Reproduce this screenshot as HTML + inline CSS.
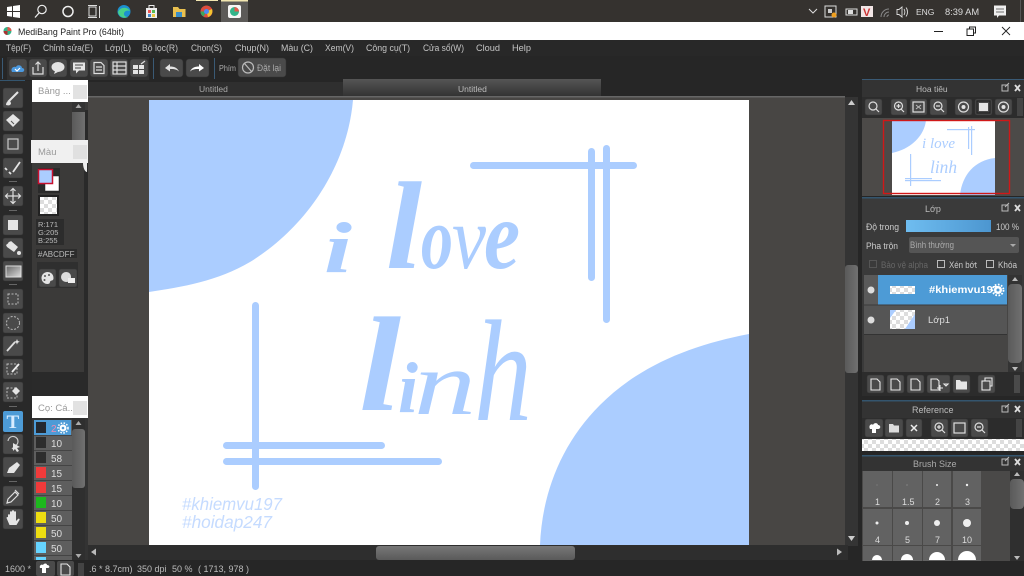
<!DOCTYPE html>
<html><head><meta charset="utf-8"><style>
html,body{margin:0;padding:0;width:1024px;height:576px;overflow:hidden;background:#262626}
svg{display:block;position:absolute;left:0;top:0}
text{font-family:"Liberation Sans","Noto Sans CJK JP",sans-serif;font-size:9.5px;fill:#c8c8c8}
.b{fill:#4a4a4a;stroke:#333;stroke-width:.5}
.w{fill:#e4e4e4}
.o{fill:none;stroke:#dedede;stroke-width:1.2}
.t{fill:none;stroke:#e8e8e8;stroke-width:1.1}
.a{fill:#abcdff}
.m{font-size:9px;fill:#c4c4c4}
.s{font-family:"Liberation Serif",serif;font-style:italic;fill:#abcdff}
</style></head><body>
<svg width="1024" height="576" viewBox="0 0 1024 576" xmlns="http://www.w3.org/2000/svg">
<defs>
<linearGradient id="tab" x1="0" y1="0" x2="0" y2="1"><stop offset="0" stop-color="#555"/><stop offset="1" stop-color="#333"/></linearGradient>
<linearGradient id="thumb" x1="0" y1="0" x2="1" y2="0"><stop offset="0" stop-color="#5a5a5a"/><stop offset="1" stop-color="#707070"/></linearGradient>
<linearGradient id="thumbh" x1="0" y1="0" x2="0" y2="1"><stop offset="0" stop-color="#777"/><stop offset="1" stop-color="#5a5a5a"/></linearGradient>
<linearGradient id="op" x1="0" y1="0" x2="1" y2="0"><stop offset="0" stop-color="#6fbdf0"/><stop offset="1" stop-color="#4c96d0"/></linearGradient>
<linearGradient id="gr" x1="0" y1="0" x2="1" y2="1"><stop offset="0" stop-color="#666"/><stop offset="1" stop-color="#ddd"/></linearGradient>
<pattern id="chk" width="8" height="8" patternUnits="userSpaceOnUse"><rect width="8" height="8" fill="#fff"/><rect width="4" height="4" fill="#ddd"/><rect x="4" y="4" width="4" height="4" fill="#ddd"/></pattern>
</defs>

<!-- taskbar -->
<rect width="1024" height="22" fill="#35322f"/>
<rect x="221" y="0" width="27" height="22" fill="#5c5a58"/>
<rect x="196" y="0" width="22" height="1" fill="#f2e6b0"/><rect x="221" y="0" width="27" height="1.500" fill="#f2e6b0"/>
<path d="M7 7l5-.8V11H7zM13 6l7-1v6h-7zM7 12h5v4.800L7 16zM13 12h7v6l-7-1z" fill="#fff"/>
<circle cx="42" cy="9.500" r="4.200" fill="none" stroke="#eee" stroke-width="1.200"/><path d="M39 13l-4 4.500" stroke="#eee" stroke-width="1.300"/>
<circle cx="68" cy="11.500" r="5" fill="none" stroke="#eee" stroke-width="1.500"/>
<path d="M89 7h7v9h-7zM88 5.500h9M88 17.500h9M99.500 6v12" fill="none" stroke="#ddd" stroke-width="1"/>
<circle cx="124" cy="11.500" r="6.500" fill="#1c8fd0"/><path d="M118 12c2-5 9-6 12-1-3-1-6 0-6 3 0 2 2 3 4 3-4 2-9 0-10-5z" fill="#47d08a"/>
<rect x="146" y="8" width="11" height="10" fill="#eee"/><path d="M149 8V5.500h5V8" fill="none" stroke="#eee"/><rect x="148" y="10" width="3" height="3" fill="#e55"/><rect x="152" y="10" width="3" height="3" fill="#5b5"/><rect x="148" y="14" width="3" height="3" fill="#48c"/><rect x="152" y="14" width="3" height="3" fill="#ec4"/>
<path d="M173 7h5l1.500 2h6v8h-12.500z" fill="#e9c04f"/><rect x="176" y="12" width="6" height="5" fill="#3a8ec9"/>
<circle cx="206.500" cy="11.500" r="6" fill="#dc4c3e"/><path d="M206.500 11.500l5.500-2.500a6 6 0 0 1-4 8z" fill="#f4c430"/><path d="M206.500 11.500l-3 5a6 6 0 0 1-3-5z" fill="#3ba55c"/><circle cx="206.500" cy="11.500" r="2.500" fill="#4c8bf5"/>
<rect x="228" y="5" width="13" height="13" rx="2" fill="#f5f5f5"/><circle cx="234.500" cy="11.500" r="4.500" fill="#32b48a"/><path d="M234.500 7a4.500 4.500 0 0 1 4.500 4.500h-4.500z" fill="#e2574c"/>
<path d="M809 9l4 4 4-4" fill="none" stroke="#ddd" stroke-width="1"/>
<rect x="825" y="6" width="11" height="11" fill="none" stroke="#ddd"/><circle cx="834" cy="15" r="2.500" fill="#f0a020"/><rect x="828" y="9" width="4" height="4" fill="#ccc"/>
<rect x="846" y="9" width="11" height="6" fill="none" stroke="#ddd"/><rect x="848" y="10" width="5" height="4" fill="#ddd"/>
<rect x="861" y="6" width="12" height="11" fill="#f2e6e6"/><text x="863" y="16" style="font-size:11px;font-weight:bold;fill:#c33">V</text>
<path d="M881 17a8 8 0 0 1 8-8M884 17a5 5 0 0 1 5-5M887 17a2 2 0 0 1 2-2" fill="none" stroke="#888"/>
<path d="M897 9.500h2l3-2.500v10l-3-2.500h-2zM904 9c1 1.500 1 4 0 6M906 7.500c2 2.500 2 6.500 0 9" fill="none" stroke="#ddd" stroke-width=".9"/>
<text x="916" y="15" style="font-size:8.500px;fill:#ddd">ENG</text>
<text x="945" y="15" style="font-size:9.300px;fill:#ddd">8:39 AM</text>
<path d="M994 5.500h12v10h-7l-2 2.500v-2.500h-3z" fill="#eee"/><path d="M996 9h8M996 12h8" stroke="#444" stroke-width=".8"/>
<rect x="1020" y="0" width="1" height="22" fill="#555"/>

<!-- title bar -->
<rect y="22" width="1024" height="18" fill="#fff"/>
<circle cx="7.500" cy="31" r="4" fill="#32b48a"/><path d="M7.500 27a4 4 0 0 1 4 4h-4z" fill="#e2574c"/><path d="M7.500 31h-4a4 4 0 0 0 4 4z" fill="#a33"/>
<text x="18" y="35" style="font-size:9.300px;fill:#222" textLength="106" lengthAdjust="spacingAndGlyphs">MediBang Paint Pro (64bit)</text>
<rect x="934" y="31" width="9" height="1" fill="#222"/>
<rect x="967" y="29" width="6.500" height="6.500" fill="#fff" stroke="#222"/><path d="M969.500 29v-2h6v6h-2" fill="none" stroke="#222"/>
<path d="M1002 27l8 8M1010 27l-8 8" stroke="#222" stroke-width=".9"/>

<!-- menu -->
<rect y="40" width="1024" height="16" fill="#282828"/>
<text class="m" x="6" y="51" textLength="25" lengthAdjust="spacingAndGlyphs">Tệp(F)</text>
<text class="m" x="43" y="51" textLength="50" lengthAdjust="spacingAndGlyphs">Chỉnh sửa(E)</text>
<text class="m" x="105" y="51" textLength="26" lengthAdjust="spacingAndGlyphs">Lớp(L)</text>
<text class="m" x="142" y="51" textLength="36" lengthAdjust="spacingAndGlyphs">Bộ lọc(R)</text>
<text class="m" x="191" y="51" textLength="31" lengthAdjust="spacingAndGlyphs">Chọn(S)</text>
<text class="m" x="235" y="51" textLength="34" lengthAdjust="spacingAndGlyphs">Chụp(N)</text>
<text class="m" x="281" y="51" textLength="32" lengthAdjust="spacingAndGlyphs">Màu (C)</text>
<text class="m" x="325" y="51" textLength="29" lengthAdjust="spacingAndGlyphs">Xem(V)</text>
<text class="m" x="366" y="51" textLength="44" lengthAdjust="spacingAndGlyphs">Công cụ(T)</text>
<text class="m" x="423" y="51" textLength="41" lengthAdjust="spacingAndGlyphs">Cửa sổ(W)</text>
<text class="m" x="476" y="51" textLength="24" lengthAdjust="spacingAndGlyphs">Cloud</text>
<text class="m" x="512" y="51" textLength="19" lengthAdjust="spacingAndGlyphs">Help</text>

<!-- toolbar -->
<rect y="56" width="1024" height="26" fill="#262626"/>
<rect x="2" y="58" width="1" height="21" fill="#3a5a75"/><rect x="153" y="58" width="1" height="21" fill="#3a5a75"/><rect x="214" y="58" width="1" height="21" fill="#3a5a75"/>
<rect x="7" y="57" width="142" height="23" fill="#2f2f2f"/>
<g>
<rect class="b" x="9" y="59" width="18" height="18" rx="3"/><rect class="b" x="29" y="59" width="18" height="18" rx="3"/><rect class="b" x="49" y="59" width="18" height="18" rx="3"/><rect class="b" x="70" y="59" width="18" height="18" rx="3"/><rect class="b" x="90" y="59" width="18" height="18" rx="3"/><rect class="b" x="110" y="59" width="18" height="18" rx="3"/><rect class="b" x="130" y="59" width="18" height="18" rx="3"/>
<rect class="b" x="160" y="59" width="23" height="18" rx="3"/><rect class="b" x="186" y="59" width="23" height="18" rx="3"/>
<rect class="b" x="238" y="58" width="48" height="19" rx="3"/>
</g>
<path d="M12 72c-2-4 2-6 4-5 1-3 6-2 6 1 3 0 3 4 0 4z" fill="#4c9ae0"/><path d="M15 69l2 2 3-3" stroke="#fff" fill="none" stroke-width="1.200"/>
<path d="M33 67v7h10v-7M38 71v-9M35.500 64.500l2.500-2.500 2.500 2.500" class="o"/>
<ellipse cx="58" cy="67" rx="6.500" ry="5" class="w"/><path d="M55 71l-1 3 4-2z" class="w"/>
<path d="M73 62.500h12v8h-6l-3 3v-3h-3z" class="w"/><path d="M75 65h8M75 68h6" stroke="#444"/>
<path d="M94 62.500h7l3 3v8h-10zM96 67h6M96 70h6" class="o"/>
<rect x="113" y="62" width="13" height="12" class="o"/><path d="M113 66h13M113 70h13M117 62v12" class="o"/>
<path d="M133 65h5v4h-5zM139 65h5v4h-5zM133 70h5v4h-5zM139 70h5v4h-5z" class="w"/><path d="M141 64l4-3" class="o"/>
<path d="M165 68l5-4v2.500c4 0 7 1 9 5-3-2.500-5-2.500-9-2.500v2.500z" class="w"/>
<path d="M204 68l-5-4v2.500c-4 0-7 1-9 5 3-2.500 5-2.500 9-2.500v2.500z" fill="#fff"/>
<text x="219" y="71" style="font-size:8.500px;fill:#aaa" textLength="17" lengthAdjust="spacingAndGlyphs">Phím</text>
<circle cx="248" cy="67.500" r="5.500" fill="none" stroke="#bbb" stroke-width="1.200"/><path d="M244.500 63.500l7 8" stroke="#bbb" stroke-width="1.200"/>
<text x="257" y="71" style="font-size:9px;fill:#aaa" textLength="24" lengthAdjust="spacingAndGlyphs">Đặt lại</text>

<!-- tabs -->
<rect x="88" y="82" width="257" height="14" fill="#2f2f2f"/>
<rect x="343" y="79" width="258" height="17" fill="url(#tab)"/>
<text x="199" y="92" style="font-size:8.500px;fill:#aaa">Untitled</text>
<text x="458" y="92" style="font-size:8.500px;fill:#bbb">Untitled</text>
<rect x="0" y="80" width="25" height="1" fill="#34556e"/>

<!-- canvas area -->
<rect x="88" y="96" width="757" height="450" fill="#484644"/>
<rect x="88" y="96" width="757" height="1.500" fill="#666"/>
<rect x="149" y="100" width="600" height="445" fill="#fff"/>
<path class="a" d="M149 100H353C347 168 305 228 250 262C218 281 182 287 149 292Z"/>
<path class="a" d="M749 334C692 345 640 365 600 405C560 445 542 495 540 545H749Z"/>
<g class="a">
<rect x="470" y="162" width="167" height="7" rx="3.500"/><rect x="588" y="148" width="7" height="133" rx="3.500"/><rect x="603" y="145" width="7" height="178" rx="3.500"/>
<rect x="252" y="302" width="7" height="188" rx="3.500"/><rect x="223" y="442" width="162" height="7" rx="3.500"/><rect x="223" y="458" width="219" height="7" rx="3.500"/>
</g>
<!-- hand lettering approximated with real text, letter by letter -->
<text class="s" x="324" y="272" style="font-size:72px;font-weight:bold" textLength="28" lengthAdjust="spacingAndGlyphs">i</text>
<text class="s" x="386" y="268" style="font-size:125px;font-weight:bold" textLength="36" lengthAdjust="spacingAndGlyphs">l</text>
<text class="s" x="421" y="268" style="font-size:90px;font-weight:bold" textLength="32" lengthAdjust="spacingAndGlyphs">o</text>
<text class="s" x="452" y="268" style="font-size:90px" textLength="34" lengthAdjust="spacingAndGlyphs">v</text>
<text class="s" x="484" y="268" style="font-size:98px;font-weight:bold" textLength="36" lengthAdjust="spacingAndGlyphs">e</text>
<text class="s" x="359" y="410" style="font-size:135px;font-weight:bold" textLength="42" lengthAdjust="spacingAndGlyphs">l</text>
<text class="s" x="398" y="412" style="font-size:72px;font-weight:bold" textLength="20" lengthAdjust="spacingAndGlyphs">i</text>
<text class="s" x="414" y="414" style="font-size:90px" textLength="62" lengthAdjust="spacingAndGlyphs">n</text>
<text class="s" x="474" y="420" style="font-size:145px" textLength="58" lengthAdjust="spacingAndGlyphs">h</text>
<text x="182" y="510" style="font-size:17.500px;font-style:italic;fill:#c5dbff" textLength="100" lengthAdjust="spacingAndGlyphs">#khiemvu197</text>
<text x="182" y="528" style="font-size:17.500px;font-style:italic;fill:#c5dbff" textLength="90" lengthAdjust="spacingAndGlyphs">#hoidap247</text>

<!-- vertical scroll -->
<rect x="845" y="96" width="17" height="464" fill="#262626"/>
<rect x="845" y="97" width="13" height="449" fill="#343434"/>
<path d="M851.500 100l3.500 5h-7z" fill="#ccc"/><path d="M851.500 541l3.500-5h-7z" fill="#ccc"/>
<rect x="845" y="265" width="13" height="108" rx="3" fill="url(#thumb)"/>
<!-- horizontal scroll -->
<rect x="88" y="545" width="760" height="15" fill="#2e2e2e"/>
<rect x="376" y="546" width="199" height="14" rx="3" fill="url(#thumbh)"/>
<path d="M91 552l5-3.500v7z" fill="#bbb"/><path d="M842 552l-5-3.500v7z" fill="#bbb"/>

<!-- status -->
<rect y="560" width="1024" height="16" fill="#262626"/>
<text x="5" y="572" style="font-size:9px;fill:#bbb">1600 *</text>
<rect x="36" y="561" width="19" height="15" rx="2" fill="#4a4a4a"/><rect x="57" y="561" width="17" height="15" rx="2" fill="#4a4a4a"/><rect x="78" y="563" width="6" height="13" fill="#444"/>
<path d="M40 568c-1-3 2-4 3-3 1-2 4-2 4 0 3 0 3 3 1 3h-2v5h-4v-5z" fill="#fff"/>
<path d="M61 564h6l3 3v8h-9z" class="t"/>
<text x="89" y="572" style="font-size:9px;fill:#bbb">.6 * 8.7cm)</text>
<text x="137" y="572" style="font-size:9px;fill:#bbb">350 dpi</text>
<text x="172" y="572" style="font-size:9px;fill:#bbb">50 %</text>
<text x="198" y="572" style="font-size:9px;fill:#bbb">( 1713, 978 )</text>

<!-- left tool strip -->
<rect x="0" y="81" width="32" height="479" fill="#292929"/>
<g>
<rect class="b" x="3" y="88" width="20" height="20" rx="2"/><rect class="b" x="3" y="111" width="20" height="20" rx="2"/><rect class="b" x="3" y="134" width="20" height="20" rx="2"/><rect class="b" x="3" y="158" width="20" height="20" rx="2"/>
<rect class="b" x="3" y="186" width="20" height="20" rx="2"/><rect class="b" x="3" y="215" width="20" height="20" rx="2"/><rect class="b" x="3" y="238" width="20" height="20" rx="2"/><rect class="b" x="3" y="261" width="20" height="20" rx="2"/>
<rect class="b" x="3" y="289" width="20" height="20" rx="2"/><rect class="b" x="3" y="313" width="20" height="20" rx="2"/><rect class="b" x="3" y="336" width="20" height="20" rx="2"/><rect class="b" x="3" y="359" width="20" height="20" rx="2"/><rect class="b" x="3" y="382" width="20" height="20" rx="2"/>
<rect x="3" y="411" width="20" height="21" rx="2" fill="#4d9bd6"/><rect class="b" x="3" y="434" width="20" height="20" rx="2"/><rect class="b" x="3" y="457" width="20" height="20" rx="2"/><rect class="b" x="3" y="486" width="20" height="20" rx="2"/><rect class="b" x="3" y="509" width="20" height="20" rx="2"/>
</g>
<g fill="#666"><rect x="9" y="181" width="8" height="1"/><rect x="9" y="210" width="8" height="1"/><rect x="9" y="284" width="8" height="1"/><rect x="9" y="406" width="8" height="1"/><rect x="9" y="481" width="8" height="1"/></g>
<path d="M8 102l10-10" stroke="#e4e4e4" stroke-width="2"/><path d="M6 105c0-3 2-4 4-4l1 2c0 2-2 3-5 2z" class="w"/>
<path d="M13 114l7 6-7 7-7-7z" class="w"/><path d="M11 121l3 3" stroke="#555"/>
<rect x="8" y="139" width="10" height="10" fill="none" stroke="#c8c8c8" stroke-width="1.200"/>
<path d="M5 168l2 2M9 172l2 2M13 172l7-10" fill="none" stroke="#e4e4e4" stroke-width="1.800"/>
<path d="M13 189v14M6 196h14M10.500 191l2.500-2.500 2.500 2.500M10.500 201l2.500 2.500 2.500-2.500M8 193.500l-2.500 2.500 2.500 2.500M18 193.500l2.500 2.500-2.500 2.500" class="o"/>
<rect x="8" y="220" width="10" height="10" class="w"/>
<path d="M6 245l5-4 7 6-4 5-7-5zM8 244c0-3 4-3 4-1" class="w"/><circle cx="19" cy="253" r="2" class="w"/>
<rect x="6" y="266" width="15" height="11" fill="url(#gr)" stroke="#ddd"/>
<rect x="8" y="294" width="10" height="10" fill="none" stroke="#bbb" stroke-dasharray="2 1.500"/>
<circle cx="13" cy="323" r="6.500" fill="none" stroke="#bbb" stroke-dasharray="2 1.500"/>
<path d="M7 351l8-9" stroke="#ddd" stroke-width="1.800"/><path d="M17 339l.8 2 2 .8-2 .8-.8 2-.8-2-2-.8 2-.8z" class="w"/>
<rect x="7" y="364" width="10" height="10" fill="none" stroke="#bbb" stroke-dasharray="2 1.500"/><path d="M12 372l7-8" stroke="#eee" stroke-width="1.800"/>
<rect x="7" y="388" width="10" height="10" fill="none" stroke="#bbb" stroke-dasharray="2 1.500"/><path d="M12 391l4-4 4 4-4 4z" class="w"/>
<text x="6.500" y="428" style="font-family:'Liberation Serif',serif;font-size:19px;font-weight:bold;fill:#d8ecff">T</text>
<path d="M8 441a5 5 0 1 1 7 5l-3 3" fill="none" stroke="#ccc" stroke-width="1.200"/><path d="M13 443l7 4-3 1 2 3-2 1-2-3-2 2z" class="w"/>
<path d="M7 473l2-5 8-6 3 3-6 8z" class="w"/>
<path d="M7 503l1-4 7-7 3 3-7 7zM15 490l4 4" class="o"/>
<path d="M8 518v-3c0-1 2-1 2 0v3-6c0-1 2-1 2 0v5-6c0-1 2-1 2 0v6-5c0-1 2-1 2 0v9l2-2c1-1 2 0 1.500 1l-3 5h-7l-3-7c0-1 1-1.500 2-.5z" class="w"/>

<!-- left panel -->
<rect x="32" y="102" width="56" height="270" fill="#3b3a39"/>
<rect x="84" y="110" width="4" height="262" fill="#2a2a2a"/>
<rect x="32" y="372" width="56" height="24" fill="#2a2a2a"/>
<rect x="72" y="102" width="13" height="40" fill="#333"/>
<path d="M78.500 104l3 4h-6z" fill="#aaa"/>
<rect x="72" y="112" width="13" height="30" fill="url(#thumb)"/>
<rect x="32" y="80" width="56" height="22" fill="#fff"/>
<text x="38" y="94" style="font-size:9.500px;fill:#999">Bảng ...</text>
<rect x="73" y="85" width="14" height="14" fill="#e2e2e2"/>
<rect x="31" y="140" width="57" height="23" fill="#f0f0f0"/>
<text x="38" y="155" style="font-size:9.500px;fill:#999">Màu</text>
<rect x="73" y="145" width="14" height="14" fill="#e0e0e0"/>
<path d="M83 163h4v9c-2 0-4-4-4-9z" fill="#eee"/>
<rect x="38" y="168" width="22" height="25" fill="#2b2b2b"/>
<rect x="45" y="176" width="14" height="15" fill="#fff" stroke="#222" stroke-width=".5"/>
<rect x="38.500" y="169.500" width="14" height="14" fill="#abcdff" stroke="#c8102e" stroke-width="1.500"/>
<rect x="38" y="195" width="21" height="21" fill="#222"/>
<rect x="40" y="197" width="17" height="17" fill="url(#chk)"/>
<rect x="36" y="219" width="28" height="26" fill="#2c2c2c"/>
<text x="38" y="227" style="font-size:7.500px;fill:#bbb">R:171</text><text x="38" y="235" style="font-size:7.500px;fill:#bbb">G:205</text><text x="38" y="243" style="font-size:7.500px;fill:#bbb">B:255</text>
<rect x="36" y="249" width="41" height="9" fill="#2c2c2c"/>
<text x="38" y="257" style="font-size:8px;fill:#bbb">#ABCDFF</text>
<rect x="37" y="262" width="41" height="26" fill="#2f2f2f"/>
<rect class="b" x="39" y="269" width="17" height="18" rx="2"/><rect class="b" x="59" y="269" width="18" height="18" rx="2"/>
<path d="M47.500 272a6 6 0 0 0 0 12c3 0 2-2 3-3 1-.8 3 0 3-3 0-4-3-6-6-6z" class="w"/><circle cx="45" cy="276" r="1" fill="#555"/><circle cx="49" cy="275" r="1" fill="#555"/><circle cx="44.500" cy="280" r="1" fill="#555"/>
<path d="M66 272a5 5 0 0 0 0 10c4 0 5-2 5-5s-2-5-5-5z" fill="#ddd"/><rect x="68" y="278" width="7" height="5" fill="#eee"/>

<!-- brush panel -->
<rect x="32" y="418" width="56" height="142" fill="#333"/>
<rect x="32" y="396" width="56" height="22" fill="#fff"/>
<text x="38" y="411" style="font-size:9.500px;fill:#999">Cọ: Cá...</text>
<rect x="73" y="401" width="14" height="14" fill="#e2e2e2"/>
<rect x="72" y="418" width="13" height="142" fill="#2f2f2f"/>
<path d="M78.500 421l3 4h-6z" fill="#aaa"/><path d="M78.500 558l3-4h-6z" fill="#aaa"/>
<rect x="72" y="429" width="13" height="59" rx="3" fill="url(#thumb)"/>
<rect x="34" y="420" width="38" height="140" fill="#5e5e5e"/>
<rect x="34" y="420" width="37" height="15" fill="#4d9bd6"/>
<g fill="#444"><rect x="34" y="435" width="38" height="1"/><rect x="34" y="450" width="38" height="1"/><rect x="34" y="465" width="38" height="1"/><rect x="34" y="480" width="38" height="1"/><rect x="34" y="495" width="38" height="1"/><rect x="34" y="510" width="38" height="1"/><rect x="34" y="525" width="38" height="1"/><rect x="34" y="540" width="38" height="1"/><rect x="34" y="555" width="38" height="1"/></g>
<rect x="36" y="422" width="10" height="11" fill="#24282f"/><rect x="36" y="437" width="10" height="11" fill="#2d2d2d"/><rect x="36" y="452" width="10" height="11" fill="#2d2d2d"/><rect x="36" y="467" width="10" height="11" fill="#f03a3a"/><rect x="36" y="482" width="10" height="11" fill="#f03a3a"/><rect x="36" y="497" width="10" height="11" fill="#1db81d"/><rect x="36" y="512" width="10" height="11" fill="#eedd11"/><rect x="36" y="527" width="10" height="11" fill="#eedd11"/><rect x="36" y="542" width="10" height="11" fill="#66d4ff"/><rect x="36" y="557" width="10" height="3" fill="#66d4ff"/>
<text x="51" y="432" style="font-size:10px;fill:#f08ab0">2</text>
<circle cx="63" cy="428" r="3.500" fill="#fff"/><circle cx="63" cy="428" r="5" fill="none" stroke="#fff" stroke-width="1.500" stroke-dasharray="1.500 1.500"/><circle cx="63" cy="428" r="1.300" fill="#4d9bd6"/>
<text x="51" y="447" style="font-size:10px;fill:#ddd">10</text><text x="51" y="462" style="font-size:10px;fill:#ddd">58</text><text x="51" y="477" style="font-size:10px;fill:#ddd">15</text><text x="51" y="492" style="font-size:10px;fill:#ddd">15</text><text x="51" y="507" style="font-size:10px;fill:#ddd">10</text><text x="51" y="522" style="font-size:10px;fill:#ddd">50</text><text x="51" y="537" style="font-size:10px;fill:#ddd">50</text><text x="51" y="552" style="font-size:10px;fill:#ddd">50</text>

<!-- right panels -->
<rect x="858" y="78" width="166" height="482" fill="#262626"/>
<rect x="862" y="80" width="162" height="116" fill="#333"/>
<rect x="862" y="79" width="162" height="1" fill="#3a5a75"/>
<text x="916" y="92" style="font-size:8.500px;fill:#bbb">Hoa tiêu</text>
<rect x="1002" y="85" width="6" height="6" fill="none" stroke="#bbb"/><path d="M1005 87l4-4" stroke="#bbb"/><path d="M1015 85l5 6M1020 85l-5 6" stroke="#ddd" stroke-width="1.800"/>
<rect x="862" y="97" width="162" height="21" fill="#2c2c2c"/>
<rect class="b" x="865" y="99" width="17" height="16" rx="2"/><rect class="b" x="891" y="99" width="16" height="16" rx="2"/><rect class="b" x="910" y="99" width="17" height="16" rx="2"/><rect class="b" x="930" y="99" width="17" height="16" rx="2"/><rect class="b" x="955" y="99" width="17" height="16" rx="2"/><rect class="b" x="975" y="99" width="17" height="16" rx="2"/><rect class="b" x="995" y="99" width="17" height="16" rx="2"/><rect x="1017" y="98" width="6" height="18" fill="#444"/>
<circle cx="873" cy="106" r="4" class="o"/><path d="M876 109l3 3" class="o"/><circle cx="898.500" cy="106" r="4" class="o"/><path d="M901 109l3 3M896.500 106h4M898.500 104v4" class="o"/>
<rect x="913" y="102" width="11" height="10" class="o"/><path d="M916 105l5 4M921 105l-5 4" stroke="#bbb"/>
<circle cx="938" cy="106" r="4" class="o"/><path d="M941 109l3 3M936 106h4" class="o"/>
<circle cx="963.500" cy="107" r="5" class="o"/><circle cx="963.500" cy="107" r="2" class="w"/>
<rect x="979" y="103" width="9" height="8" class="w"/><path d="M977 101h13v12h-13z" fill="none" stroke="#222" stroke-width="1.200"/>
<circle cx="1003.500" cy="107" r="5" class="o"/><circle cx="1003.500" cy="107" r="2" class="w"/>
<!-- preview -->
<rect x="862" y="118" width="162" height="78" fill="#4c4a48"/>
<rect x="892" y="120" width="103" height="75" fill="#fff"/>
<path class="a" d="M892 120H926C925 132 915 148 892 153Z"/><path class="a" d="M995 158C975 160 962 175 960 195H995Z"/>
<g fill="#abcdff"><rect x="947" y="129" width="28" height="1.200"/><rect x="968" y="127" width="1.200" height="22"/><rect x="971" y="126" width="1.200" height="29"/><rect x="910" y="154" width="1.200" height="32"/><rect x="905" y="178" width="27" height="1.200"/><rect x="905" y="180" width="36" height="1.200"/></g>
<text class="s" x="922" y="148" style="font-size:15px" textLength="33" lengthAdjust="spacingAndGlyphs">i love</text>
<text class="s" x="930" y="173" style="font-size:18px" textLength="27" lengthAdjust="spacingAndGlyphs">linh</text>
<rect x="883.500" y="120.500" width="126" height="73" fill="none" stroke="#d01818" stroke-width="1.400"/>

<!-- layer panel -->
<rect x="862" y="198" width="162" height="196" fill="#3a3a3a"/>
<rect x="862" y="197" width="162" height="1.500" fill="#34556e"/>
<text x="925" y="212" style="font-size:9px;fill:#bbb">Lớp</text>
<rect x="1002" y="205" width="6" height="6" fill="none" stroke="#bbb"/><path d="M1005 207l4-4" stroke="#bbb"/><path d="M1015 205l5 6M1020 205l-5 6" stroke="#ddd" stroke-width="1.800"/>
<text x="866" y="230" style="font-size:9px;fill:#ccc" textLength="33" lengthAdjust="spacingAndGlyphs">Độ trong</text>
<rect x="906" y="220" width="85" height="12" fill="url(#op)"/>
<text x="996" y="230" style="font-size:9px;fill:#ccc" textLength="23" lengthAdjust="spacingAndGlyphs">100 %</text>
<text x="866" y="249" style="font-size:9px;fill:#ccc" textLength="32" lengthAdjust="spacingAndGlyphs">Pha trộn</text>
<rect x="909" y="237" width="110" height="16" rx="2" fill="#555"/>
<text x="910" y="248" style="font-size:9px;fill:#aaa" textLength="44" lengthAdjust="spacingAndGlyphs">Bình thường</text>
<path d="M1010 244h6l-3 3z" fill="#aaa"/>
<rect x="869.500" y="260.500" width="7" height="7" fill="none" stroke="#555"/>
<text x="881" y="268" style="font-size:8.800px;fill:#666" textLength="47" lengthAdjust="spacingAndGlyphs">Bảo vệ alpha</text>
<rect x="937.500" y="260.500" width="7" height="7" fill="none" stroke="#bbb"/>
<text x="949" y="268" style="font-size:8.800px;fill:#ccc" textLength="28" lengthAdjust="spacingAndGlyphs">Xén bớt</text>
<rect x="986.500" y="260.500" width="7" height="7" fill="none" stroke="#bbb"/>
<text x="998" y="268" style="font-size:8.800px;fill:#ccc" textLength="19" lengthAdjust="spacingAndGlyphs">Khóa</text>
<rect x="864" y="275" width="144" height="97" fill="#464544"/>
<rect x="864" y="275" width="14" height="30" fill="#5a5a5a"/>
<rect x="878" y="275" width="129" height="30" fill="#4d9bd6"/>
<rect x="864" y="305" width="143" height="29" fill="#555"/>
<rect x="864" y="304.500" width="143" height="1" fill="#3a3a3a"/><rect x="864" y="334" width="143" height="1" fill="#333"/>
<circle cx="871" cy="290" r="3.500" fill="#ddd"/><circle cx="871" cy="320" r="3.500" fill="#ddd"/>
<rect x="890" y="286" width="25" height="8" fill="url(#chk)"/>
<rect x="890" y="310" width="25" height="19" fill="url(#chk)"/>
<path d="M890 310h6l-6 8zM915 314v15h-10z" fill="#abcdff"/>
<text x="929" y="293" style="font-size:9.800px;font-weight:bold;fill:#fff" textLength="70" lengthAdjust="spacingAndGlyphs">#khiemvu197</text>
<circle cx="998" cy="290" r="4" fill="#fff"/><circle cx="998" cy="290" r="5.500" fill="none" stroke="#fff" stroke-width="1.800" stroke-dasharray="1.700 1.500"/><circle cx="998" cy="290" r="1.500" fill="#4d9bd6"/>
<text x="928" y="323" style="font-size:9.500px;fill:#ddd">Lớp1</text>
<rect x="1008" y="275" width="14" height="99" fill="#333"/>
<path d="M1015 277l3 4h-6z" fill="#bbb"/><path d="M1015 371l3-4h-6z" fill="#bbb"/>
<rect x="1008" y="284" width="14" height="79" rx="4" fill="url(#thumb)"/>
<rect x="862" y="372" width="162" height="24" fill="#2c2c2c"/>
<rect class="b" x="867" y="375" width="17" height="18" rx="2"/><rect class="b" x="887" y="375" width="17" height="18" rx="2"/><rect class="b" x="907" y="375" width="17" height="18" rx="2"/><rect class="b" x="927" y="375" width="23" height="18" rx="2"/><rect class="b" x="953" y="375" width="17" height="18" rx="2"/><rect class="b" x="978" y="375" width="17" height="18" rx="2"/><rect x="1014" y="375" width="6" height="18" fill="#4a4a4a"/>
<path d="M871 379h6l3 3v8h-9zM891 379h6l3 3v8h-9zM911 379h6l3 3v8h-9zM931 379h6l2 2v9h-8z" class="t"/><path d="M937 388h6M940 385v6M944 384h4l-2 2z" class="t"/>
<path d="M956 380h4l1 1.500h6v8h-11z" class="w"/>
<rect x="982" y="381" width="8" height="9" class="t"/><path d="M985 381v-3h7v8h-2" class="t"/>

<!-- reference panel -->
<rect x="862" y="401" width="162" height="17" fill="#333"/>
<rect x="862" y="400" width="162" height="1.500" fill="#34556e"/>
<text x="912" y="413" style="font-size:9px;fill:#bbb">Reference</text>
<rect x="1002" y="406" width="6" height="6" fill="none" stroke="#bbb"/><path d="M1005 408l4-4" stroke="#bbb"/><path d="M1015 406l5 6M1020 406l-5 6" stroke="#ddd" stroke-width="1.800"/>
<rect x="862" y="418" width="162" height="21" fill="#2c2c2c"/>
<rect class="b" x="865" y="419" width="18" height="18" rx="2"/><rect class="b" x="885" y="419" width="18" height="18" rx="2"/><rect class="b" x="906" y="419" width="16" height="18" rx="2"/><rect class="b" x="931" y="419" width="17" height="18" rx="2"/><rect class="b" x="951" y="419" width="17" height="18" rx="2"/><rect class="b" x="971" y="419" width="17" height="18" rx="2"/><rect x="1016" y="419" width="6" height="18" fill="#444"/>
<path d="M870 429c-2-4 2-6 3-4 1-3 5-2 5 0 3 0 3 4 0 4h-2v4h-4v-4z" fill="#fff"/>
<path d="M889 424h4l1 1.500h5v7h-10z" fill="#ddd"/>
<path d="M911 425l6 6M917 425l-6 6" stroke="#eee" stroke-width="1.500"/>
<circle cx="939" cy="427" r="4" class="o"/><path d="M942 430l3 3M937 427h4M939 425v4" class="o"/>
<rect x="954" y="423" width="11" height="10" class="o"/>
<circle cx="979" cy="427" r="4" class="o"/><path d="M982 430l3 3M977 427h4" class="o"/>
<rect x="862" y="439" width="162" height="12" fill="url(#chk)"/>

<!-- brush size -->
<rect x="862" y="456" width="162" height="104" fill="#333"/>
<rect x="862" y="455" width="162" height="1.500" fill="#34556e"/>
<text x="913" y="467" style="font-size:9px;fill:#aaa">Brush Size</text>
<rect x="1002" y="459" width="6" height="6" fill="none" stroke="#bbb"/><path d="M1005 461l4-4" stroke="#bbb"/><path d="M1015 459l5 6M1020 459l-5 6" stroke="#ddd" stroke-width="1.800"/>
<rect x="862" y="471" width="149" height="90" fill="#4a4948"/>
<g fill="#626262">
<rect x="863" y="471" width="29" height="36"/><rect x="893" y="471" width="29" height="36"/><rect x="923" y="471" width="28" height="36"/><rect x="953" y="471" width="28" height="36"/>
<rect x="863" y="509" width="29" height="36"/><rect x="893" y="509" width="29" height="36"/><rect x="923" y="509" width="28" height="36"/><rect x="953" y="509" width="28" height="36"/>
<rect x="863" y="546" width="29" height="15"/><rect x="893" y="546" width="29" height="15"/><rect x="923" y="546" width="28" height="15"/><rect x="953" y="546" width="28" height="15"/>
</g>
<g fill="#eee">
<circle cx="877" cy="485" r=".5" fill="#999"/><circle cx="907" cy="485" r=".6" fill="#999"/><circle cx="937" cy="485" r="1"/><circle cx="967" cy="485" r="1.200"/>
<circle cx="877" cy="523" r="1.500"/><circle cx="907" cy="523" r="2"/><circle cx="937" cy="523" r="3"/><circle cx="967" cy="523" r="4"/>
</g>
<g fill="#fff"><path d="M872 560a5 5 0 0 1 10 0z"/><path d="M901 560a6 6 0 0 1 12 0z"/><path d="M929 560a8 8 0 0 1 16 0z"/><path d="M958 560a9 9 0 0 1 18 0z"/></g>
<text x="875" y="505" style="font-size:9px;fill:#ddd">1</text><text x="902" y="505" style="font-size:9px;fill:#ddd">1.5</text><text x="935" y="505" style="font-size:9px;fill:#ddd">2</text><text x="965" y="505" style="font-size:9px;fill:#ddd">3</text><text x="875" y="543" style="font-size:9px;fill:#ddd">4</text><text x="905" y="543" style="font-size:9px;fill:#ddd">5</text><text x="935" y="543" style="font-size:9px;fill:#ddd">7</text><text x="962" y="543" style="font-size:9px;fill:#ddd">10</text>
<rect x="1010" y="471" width="14" height="90" fill="#2f2f2f"/>
<path d="M1017 472l3 4h-6z" fill="#bbb"/><path d="M1017 560l3-4h-6z" fill="#bbb"/>
<rect x="1010" y="479" width="14" height="30" rx="4" fill="url(#thumb)"/>
</svg>
</body></html>
